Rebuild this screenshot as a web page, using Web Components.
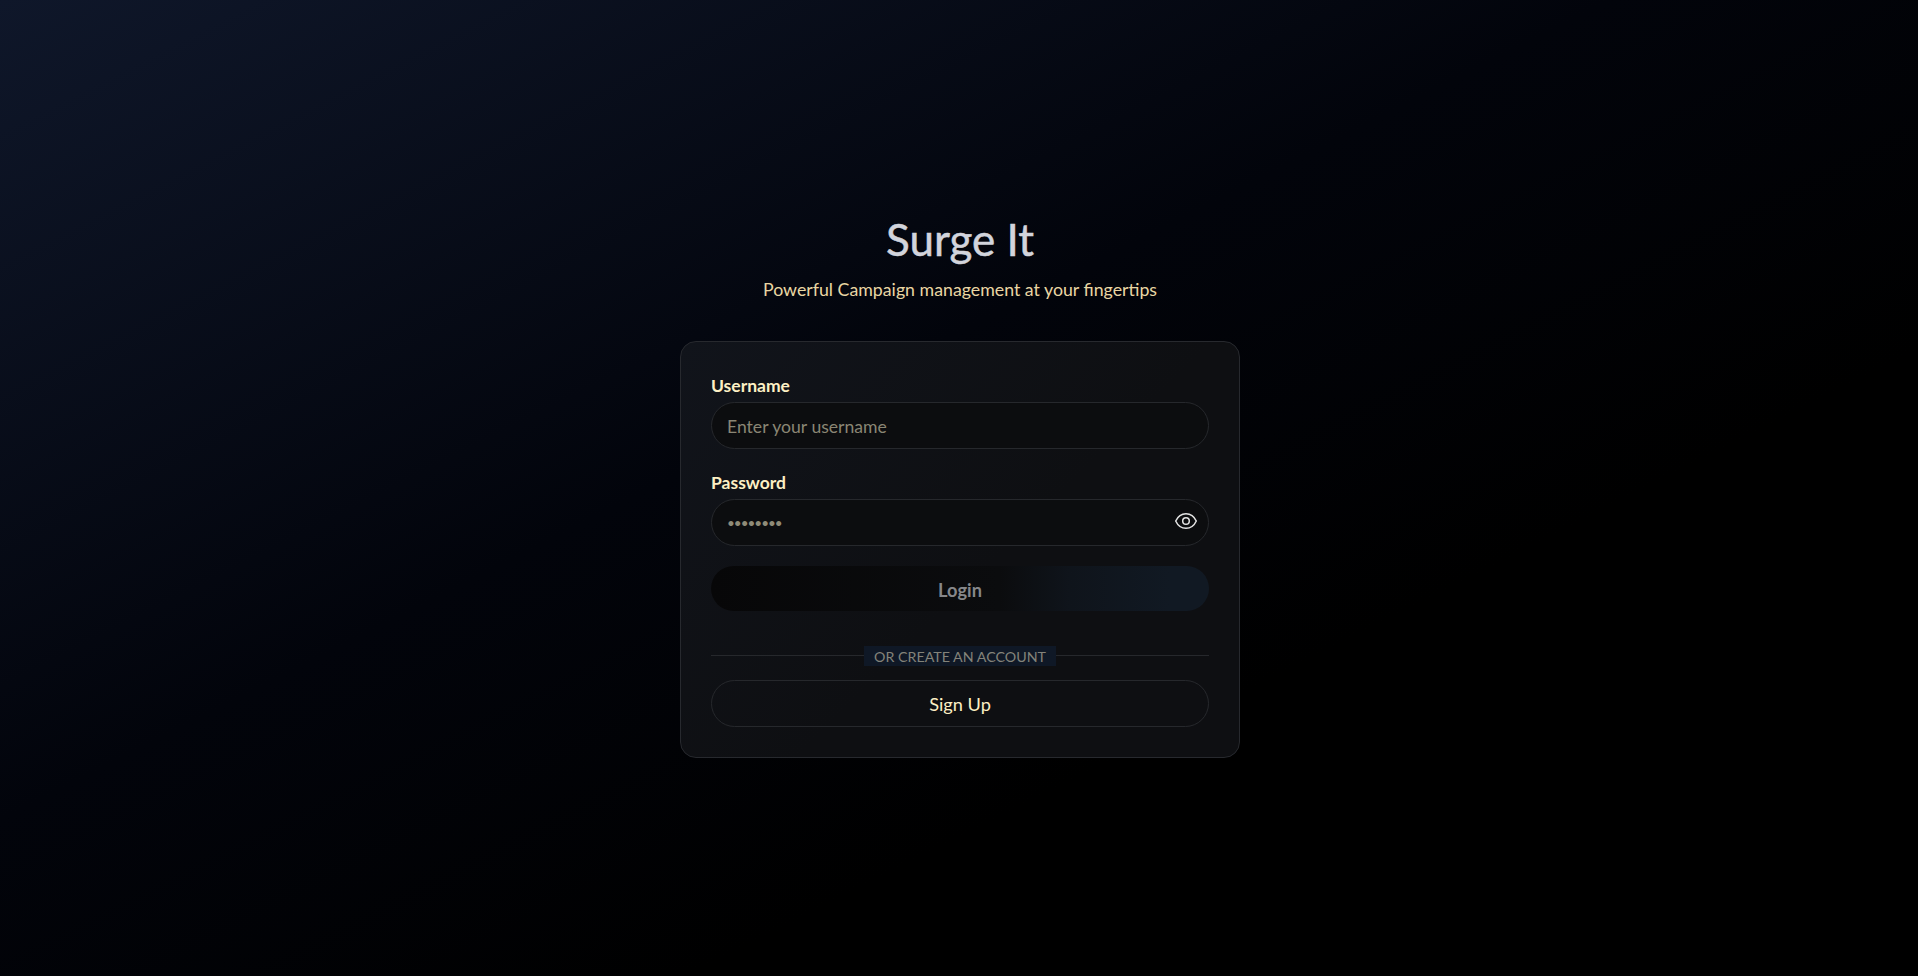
<!DOCTYPE html>
<html lang="en">
<head>
<meta charset="utf-8">
<title>Surge It</title>
<style>
  html, body { margin: 0; height: 100%; }
  body {
    font-family: "Lato", "Open Sans", sans-serif;
    background: linear-gradient(to bottom right, #0f172a 0%, #02040b 42%, #000 68%);
  }
</style>
</head>
<body>
<login-page>
  <brand-header slot="header" subtitle="Powerful Campaign management at your fingertips">Surge It</brand-header>
  <login-card>
    <form-field label="Username" placeholder="Enter your username"></form-field>
    <form-field label="Password" type="password" value="password"></form-field>
    <action-button kind="primary">Login</action-button>
    <or-divider>OR CREATE AN ACCOUNT</or-divider>
    <action-button kind="outline">Sign Up</action-button>
  </login-card>
</login-page>

<script>
class LoginPage extends HTMLElement {
  constructor() {
    super();
    this.attachShadow({ mode: 'open' });
    this.shadowRoot.innerHTML = `
      <style>
        :host {
          display: flex; flex-direction: column; align-items: center; justify-content: center;
          box-sizing: border-box; min-height: 100vh; padding-left: 2px;
        }
      </style>
      <slot name="header"></slot>
      <slot></slot>
    `;
  }
}

class BrandHeader extends HTMLElement {
  constructor() {
    super();
    this.attachShadow({ mode: 'open' });
    this.shadowRoot.innerHTML = `
      <style>
        :host { display: block; text-align: center; margin-bottom: 38px; }
        h1 { margin: 0 0 16px; font-size: 44px; line-height: 41px; font-weight: 400; color: #d2d4dc; -webkit-text-stroke: 0.5px #d2d4dc; }
        p { margin: 0 0 1px; font-size: 17.75px; line-height: 26px; color: #e9d6a3; }
      </style>
      <h1><slot></slot></h1>
      <p></p>
    `;
    this.shadowRoot.querySelector('p').textContent = this.getAttribute('subtitle');
  }
}

class LoginCard extends HTMLElement {
  constructor() {
    super();
    this.attachShadow({ mode: 'open' });
    this.shadowRoot.innerHTML = `
      <style>
        :host {
          display: flex; flex-direction: column; box-sizing: border-box;
          width: 560px; padding: 30px;
          background: linear-gradient(135deg, #11141b, #0e0f12 55%);
          border: 1px solid #27292e; border-radius: 16px;
        }
      </style>
      <slot></slot>
    `;
  }
}

class FormField extends HTMLElement {
  constructor() {
    super();
    this.attachShadow({ mode: 'open' });
    const isPassword = this.getAttribute('type') === 'password';
    this.shadowRoot.innerHTML = `
      <style>
        :host { display: block; margin-bottom: 20px; }
        label { display: block; font-size: 17.5px; line-height: 27px; font-weight: 700; color: #fdf0c4; margin-bottom: 3px; }
        .wrap { position: relative; }
        input {
          display: block; box-sizing: border-box; width: 100%; height: 47px;
          padding: 2px 15px 0; border: 1px solid #26282c; border-radius: 24px;
          background: #0c0d0f; color: #8f8b78; font: inherit; font-size: 17.6px; outline: none;
        }
        input[type="password"] { font-size: 13.5px; letter-spacing: -1px; }
        input::placeholder { color: #8a8674; opacity: 1; }
        button {
          position: absolute; right: 11px; top: 10px; width: 24px; height: 24px;
          padding: 0; border: 0; background: none; color: #e4e4e4;
        }
        svg { display: block; }
      </style>
      <label for="f"></label>
      <div class="wrap">
        <input id="f">
        ${isPassword ? `<button type="button" aria-label="Show password">
          <svg width="24" height="24" viewBox="0 0 24 24" fill="none" stroke="currentColor" stroke-width="1.5" stroke-linecap="round" stroke-linejoin="round">
            <path d="M1.700 12C4 7 7.600 4.700 12 4.700S20 7 22.300 12C20 17 16.400 19.300 12 19.300S4 17 1.700 12z"/>
            <circle cx="12" cy="12" r="3.300"/>
          </svg></button>` : ''}
      </div>
    `;
    this.shadowRoot.querySelector('label').textContent = this.getAttribute('label');
    const input = this.shadowRoot.querySelector('input');
    input.type = this.getAttribute('type') || 'text';
    if (this.hasAttribute('placeholder')) input.placeholder = this.getAttribute('placeholder');
    if (this.hasAttribute('value')) input.value = this.getAttribute('value');
  }
}

class ActionButton extends HTMLElement {
  constructor() {
    super();
    this.attachShadow({ mode: 'open' });
    this.shadowRoot.innerHTML = `
      <style>
        :host { display: block; }
        button {
          display: block; box-sizing: border-box; width: 100%; padding: 2px 0 0;
          font: inherit; font-size: 18.2px; cursor: pointer;
        }
        :host([kind="primary"]) button {
          height: 45px; border-radius: 23px; padding-top: 3px;
          border: 0; font-weight: 700; color: #86878a;
          background: linear-gradient(90deg, #070708 0%, #0b0c0e 58%, #0f141b 72%, #111923 92%);
        }
        :host([kind="outline"]) button {
          height: 47px; border-radius: 24px;
          border: 1px solid #26282c; background: transparent; color: #fdf0c4;
        }
      </style>
      <button type="button"><slot></slot></button>
    `;
  }
}

class OrDivider extends HTMLElement {
  constructor() {
    super();
    this.attachShadow({ mode: 'open' });
    this.shadowRoot.innerHTML = `
      <style>
        :host { display: flex; align-items: center; margin: 35px 0 14px; }
        i { flex: 1; height: 1px; background: #26282c; }
        span { padding: 1px 10px 0; font-size: 14.25px; line-height: 19px; color: #83837a; background: #0f1826; }
      </style>
      <i></i><span><slot></slot></span><i></i>
    `;
  }
}

customElements.define('login-page', LoginPage);
customElements.define('brand-header', BrandHeader);
customElements.define('login-card', LoginCard);
customElements.define('form-field', FormField);
customElements.define('action-button', ActionButton);
customElements.define('or-divider', OrDivider);
</script>
</body>
</html>
